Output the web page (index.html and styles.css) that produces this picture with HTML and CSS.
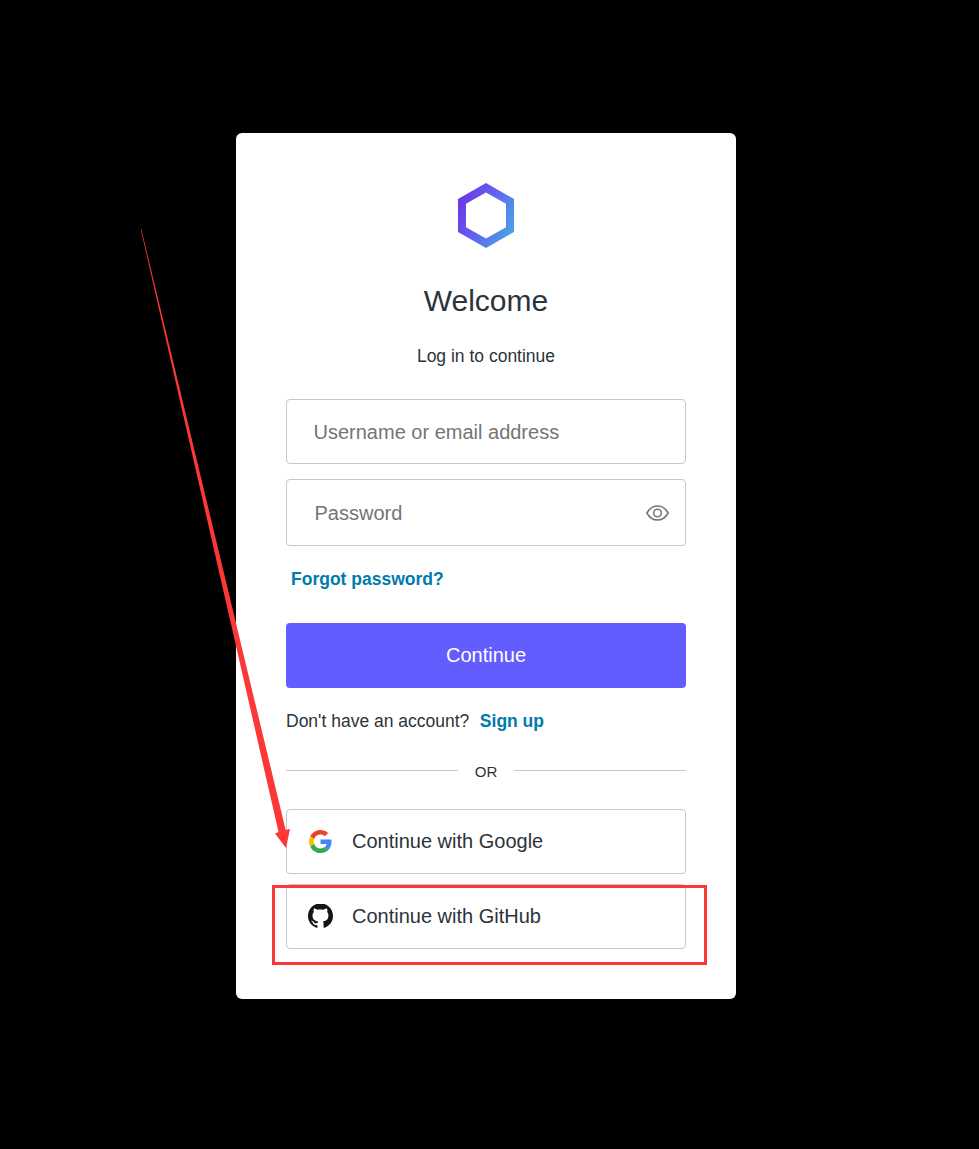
FILE: index.html
```
<!DOCTYPE html>
<html lang="en">
<head>
<meta charset="utf-8">
<title>Log in</title>
<link rel="stylesheet" href="styles.css">
</head>
<body>
<main class="card">
  <svg class="logo" viewBox="0 0 56 65">
    <defs><linearGradient id="brand" x1="0" y1="0.2" x2="1" y2="0.75"><stop offset="0" stop-color="#7033e8"/><stop offset=".5" stop-color="#6065ed"/><stop offset="1" stop-color="#48a5e8"/></linearGradient></defs>
    <path fill="url(#brand)" fill-rule="evenodd" d="M28 0 56 16V49L28 65 0 49V16ZM28 9.500 8 20.700V44.200L28 55.500 48 44.200V20.700Z"/>
  </svg>
  <h1 class="title">Welcome</h1>
  <p class="subtitle">Log in to continue</p>
  <form class="form">
    <div class="field"><input class="input" type="text" placeholder="Username or email address" aria-label="Username or email address"></div>
    <div class="field field-password">
      <input class="input" type="password" placeholder="Password" aria-label="Password">
      <svg class="eye" viewBox="0 0 24 18" fill="none" stroke="#6f7780" stroke-width="1.600"><path d="M.9 9C3.600 4.200 7.300 1.600 12 1.600S20.400 4.200 23.100 9C20.400 13.800 16.700 16.400 12 16.400S3.600 13.800.9 9Z"/><circle cx="12" cy="9" r="4"/></svg>
    </div>
    <a class="link forgot">Forgot password?</a>
    <button class="submit" type="button">Continue</button>
  </form>
  <p class="signup">Don't have an account?<a class="link signup-link">Sign up</a></p>
  <div class="divider"><span class="divider-label">OR</span></div>
  <div class="providers">
    <button class="provider" type="button">
      <svg class="google" viewBox="0 0 48 48"><path fill="#EA4335" d="M24 9.500c3.540 0 6.710 1.220 9.210 3.600l6.850-6.850C35.900 2.380 30.470 0 24 0 14.620 0 6.510 5.380 2.560 13.220l7.980 6.190C12.430 13.720 17.740 9.500 24 9.500z"/><path fill="#4285F4" d="M46.980 24.550c0-1.570-.15-3.090-.38-4.550H24v9.020h12.940c-.58 2.960-2.260 5.480-4.780 7.180l7.730 6c4.510-4.180 7.090-10.360 7.090-17.650z"/><path fill="#FBBC05" d="M10.530 28.590c-.48-1.450-.76-2.990-.76-4.590s.27-3.140.76-4.590l-7.980-6.190C.92 16.460 0 20.120 0 24c0 3.880.92 7.540 2.560 10.780l7.970-6.190z"/><path fill="#34A853" d="M24 48c6.480 0 11.930-2.130 15.890-5.810l-7.730-6c-2.150 1.450-4.920 2.300-8.160 2.300-6.260 0-11.570-4.220-13.470-9.910l-7.980 6.190C6.510 42.620 14.620 48 24 48z"/></svg>
      <span>Continue with Google</span>
    </button>
    <button class="provider" type="button">
      <svg class="github" viewBox="0 0.9 24 23"><path fill="#161514" d="M12 .297c-6.630 0-12 5.373-12 12 0 5.303 3.438 9.800 8.205 11.385.6.113.82-.258.82-.577 0-.285-.01-1.040-.015-2.040-3.338.724-4.042-1.610-4.042-1.610C4.422 18.070 3.633 17.700 3.633 17.700c-1.087-.744.084-.729.084-.729 1.205.084 1.838 1.236 1.838 1.236 1.070 1.835 2.809 1.305 3.495.998.108-.776.417-1.305.76-1.605-2.665-.3-5.466-1.332-5.466-5.930 0-1.310.465-2.380 1.235-3.220-.135-.303-.54-1.523.105-3.176 0 0 1.005-.322 3.300 1.230.96-.267 1.980-.399 3-.405 1.020.006 2.040.138 3 .405 2.280-1.552 3.285-1.230 3.285-1.230.645 1.653.24 2.873.12 3.176.765.840 1.230 1.910 1.230 3.220 0 4.610-2.805 5.625-5.475 5.920.42.360.81 1.096.81 2.220 0 1.606-.015 2.896-.015 3.286 0 .315.210.690.825.570C20.565 22.092 24 17.592 24 12.297c0-6.627-5.373-12-12-12"/></svg>
      <span>Continue with GitHub</span>
    </button>
  </div>
</main>
<svg class="arrow" viewBox="0 0 150 620"><path fill="#fc3837" d="M.7 0H1.300L145.700 601 150 600 146 619 135 604.500 138.500 603Z"/></svg>
<div class="highlight"></div>
</body>
</html>
```

FILE: styles.css
```
* { box-sizing: border-box; }

body {
  margin: 0;
  min-height: 1149px;
  padding: 133px 0 0 236px;
  position: relative;
  background: #000;
  color: #2d333a;
  font-family: "Liberation Sans", Arial, sans-serif;
}

.card {
  display: flex;
  flex-direction: column;
  width: 500px;
  height: 866px;
  padding: 50px;
  background: #fff;
  border-radius: 6px;
}

.logo { width: 56px; height: 65px; align-self: center; }

.title {
  margin: 35px 0 0;
  font-size: 30px;
  font-weight: 400;
  line-height: 36px;
  text-align: center;
}

.subtitle {
  margin: 24px 0 0;
  font-size: 17.5px;
  line-height: 26px;
  text-align: center;
}

.form { display: flex; flex-direction: column; margin-top: 30px; }

.field {
  display: flex;
  align-items: center;
  height: 65px;
  padding: 0 16px 0 26.5px;
  border: 1px solid #c2c8d0;
  border-radius: 4px;
}

.field-password { height: 67px; margin-top: 15px; padding-left: 27.5px; }

.input {
  flex: 1;
  min-width: 0;
  padding: 2px 0 0;
  border: 0;
  outline: 0;
  background: none;
  font: 20px "Liberation Sans", Arial, sans-serif;
}

.input::placeholder { color: #757575; opacity: 1; }

.eye { width: 23px; height: 18px; }

.link { color: #007bad; font-weight: 700; }

.forgot {
  align-self: flex-start;
  margin: 20px 0 0 5px;
  font-size: 17.5px;
  line-height: 26px;
}

.submit {
  height: 65px;
  margin-top: 31px;
  padding: 0;
  border: 0;
  border-radius: 4px;
  background: #635dff;
  color: #fff;
  font: 20px "Liberation Sans", Arial, sans-serif;
}

.signup { margin: 20px 0 0; font-size: 17.5px; line-height: 26px; }

.signup-link { margin-left: 10.5px; }

.divider {
  display: flex;
  align-items: center;
  gap: 17px;
  height: 20px;
  margin-top: 27px;
  font-size: 15px;
  line-height: 20px;
}

.divider-label { padding-top: 2px; }

.divider::before,
.divider::after {
  content: "";
  flex: 1;
  height: 1px;
  margin-top: -1px;
  background: #c2c8d0;
}

.providers { display: grid; gap: 10px; margin-top: 28px; }

.provider {
  display: flex;
  align-items: center;
  height: 65px;
  padding: 0 20px;
  border: 1px solid #c2c8d0;
  border-radius: 4px;
  background: #fff;
  color: #2d333a;
  font: 20px "Liberation Sans", Arial, sans-serif;
}

.google { width: 23px; height: 23px; margin: 0 20.5px 1px 1.5px; }

.github { width: 25px; height: 24px; margin: 0 19.5px 1px 0.5px; }

.arrow { position: absolute; left: 140px; top: 229px; width: 150px; height: 620px; }

.highlight {
  position: absolute;
  left: 272px;
  top: 885px;
  width: 435px;
  height: 80px;
  border: 3px solid #fc3837;
}
```
